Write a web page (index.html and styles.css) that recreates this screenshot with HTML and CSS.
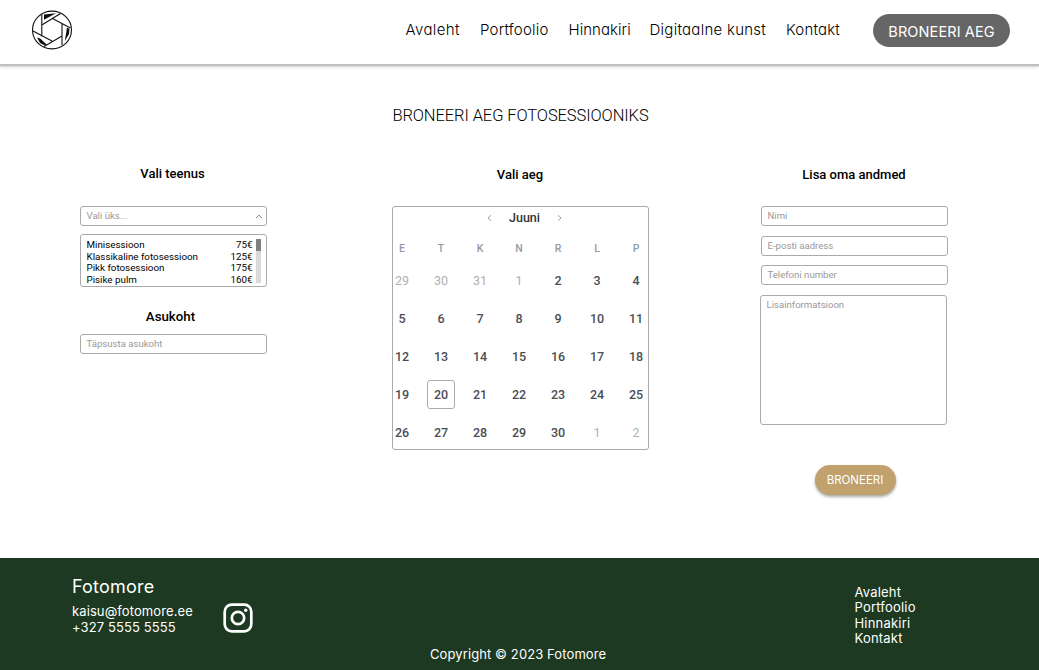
FILE: index.html
```html
<!DOCTYPE html>
<html lang="et">
<head>
<meta charset="utf-8">
<title>Fotomore</title>
<link rel="stylesheet" href="styles.css">
</head>
<body>
<header class="header">
  <svg class="logo" viewBox="0 0 42 42" fill="none" stroke="#111" stroke-width="1.1">
    <ellipse cx="21" cy="21" rx="19.500" ry="18.900"/>
    <path d="M10.800 5.500V27.500M10.800 16L29.500 4.500M21 9.300L39.500 19M31 15V36M31 27L13 37.500M21 32L2 22"/>
    <path d="M13 5.500L25 4.300L13 10.800zM36 18.500L38.500 20L38 25L33.800 32zM6 28.500L9.500 29.800L15.600 35.500L14 36.500L9 34z" fill="#111" stroke="none"/>
  </svg>
  <nav class="nav">
    <a class="nav-home">Avaleht</a>
    <a class="nav-portfolio">Portfoolio</a>
    <a class="nav-prices">Hinnakiri</a>
    <a class="nav-art">Digitaalne kunst</a>
    <a class="nav-contact">Kontakt</a>
  </nav>
  <a class="book-link">BRONEERI AEG</a>
</header>
<main class="main">
  <h1 class="title">BRONEERI AEG FOTOSESSIOONIKS</h1>
  <div class="columns">
    <section class="column service">
      <h2 class="heading">Vali teenus</h2>
      <div class="field select"><span>Vali üks...</span>
        <svg class="caret" viewBox="0 0 8 5" fill="none" stroke="#888"><path d="M1 4L4 1.200L7 4"/></svg>
      </div>
      <div class="options">
        <ul class="option-list">
          <li><span>Minisessioon</span><span>75€</span></li>
          <li><span>Klassikaline fotosessioon</span><span>125€</span></li>
          <li><span>Pikk fotosessioon</span><span>175€</span></li>
          <li><span>Pisike pulm</span><span>160€</span></li>
        </ul>
        <div class="scrollbar"><div class="thumb"></div></div>
      </div>
      <h2 class="heading location">Asukoht</h2>
      <div class="field">Täpsusta asukoht</div>
    </section>
    <section class="column">
      <h2 class="heading">Vali aeg</h2>
      <div class="calendar">
        <div class="month">
          <svg class="arrow" viewBox="0 0 5 8" fill="none" stroke="#888" stroke-width=".8"><path d="M4 1.200L1 4L4 6.800"/></svg>
          <span>Juuni</span>
          <svg class="arrow" viewBox="0 0 5 8" fill="none" stroke="#888" stroke-width=".8"><path d="M1 1.200L4 4L1 6.800"/></svg>
        </div>
        <div class="week names"><span>E</span><span>T</span><span>K</span><span>N</span><span>R</span><span>L</span><span>P</span></div>
        <div class="week"><span class="off">29</span><span class="off">30</span><span class="off">31</span><span class="off">1</span><span>2</span><span>3</span><span>4</span></div>
        <div class="week"><span>5</span><span>6</span><span>7</span><span>8</span><span>9</span><span>10</span><span>11</span></div>
        <div class="week"><span>12</span><span>13</span><span>14</span><span>15</span><span>16</span><span>17</span><span>18</span></div>
        <div class="week"><span>19</span><span class="selected">20</span><span>21</span><span>22</span><span>23</span><span>24</span><span>25</span></div>
        <div class="week"><span>26</span><span>27</span><span>28</span><span>29</span><span>30</span><span class="off">1</span><span class="off">2</span></div>
      </div>
    </section>
    <section class="column details">
      <h2 class="heading">Lisa oma andmed</h2>
      <div class="field">Nimi</div>
      <div class="field">E-posti aadress</div>
      <div class="field">Telefoni number</div>
      <div class="field notes">Lisainformatsioon</div>
      <a class="submit">BRONEERI</a>
    </section>
  </div>
</main>
<footer class="footer">
  <div class="contact">
    <div class="brand">Fotomore</div>
    <div class="mail">kaisu@fotomore.ee</div>
    <div class="phone">+327 5555 5555</div>
  </div>
  <svg class="instagram" viewBox="0 0 30 30" fill="none" stroke="#fff" stroke-width="2.700">
    <rect x="1.700" y="1.700" width="26.600" height="26.600" rx="7"/>
    <circle cx="15" cy="15" r="6.200"/>
    <circle cx="22.700" cy="7.300" r="1.700" fill="#fff" stroke="none"/>
  </svg>
  <div class="copyright">Copyright © 2023 Fotomore</div>
  <nav class="footer-nav"><a>Avaleht</a><a>Portfoolio</a><a>Hinnakiri</a><a>Kontakt</a></nav>
</footer>
</body>
</html>
```
FILE: styles.css
```css
* { box-sizing: border-box; }
body {
  margin: 0;
  height: 670px;
  display: flex;
  flex-direction: column;
  overflow: hidden;
  background: #fff;
  color: #000;
  font-family: Roboto, sans-serif;
}
.header {
  height: 64px;
  flex: none;
  display: flex;
  align-items: flex-start;
  padding-left: 31px;
  box-shadow: 0 2px 1px #c0c0c0, 0 3px 3px #d4d4d4;
}
.logo { width: 42px; height: 42px; margin-top: 9px; }
.nav {
  display: flex;
  margin-left: 332.500px;
  width: 467.500px;
  padding-top: 20px;
  font: 300 15px/20px Inter, sans-serif;
  font-feature-settings: "cv11";
  letter-spacing: .2px;
  white-space: nowrap;
}
.nav-home { width: 74.500px; letter-spacing: .4px; }
.nav-portfolio { width: 88.500px; }
.nav-prices { width: 81px; letter-spacing: .05px; }
.nav-art { width: 136.500px; letter-spacing: .27px; }
.book-link {
  width: 137px;
  height: 33px;
  margin-top: 13.500px;
  border-radius: 17px;
  background: #666;
  color: #fff;
  font: 400 14.500px/35px Inter, sans-serif;
  letter-spacing: .1px;
  text-align: center;
}
.main { flex: 1; }
.title {
  margin: 42px 0 0;
  padding-left: 2px;
  font-size: 16.500px;
  line-height: 20px;
  font-weight: 300;
  letter-spacing: -.1px;
  text-align: center;
}
.columns {
  display: grid;
  grid-template-columns: 187px 257px 187px;
  column-gap: 125px;
  padding: 38px 0 0 79.500px;
}
.details { margin: 0 13px 0 -13px; }
.heading {
  margin: 0 0 22px;
  padding-top: 1px;
  font-size: 13px;
  line-height: 19px;
  font-weight: 500;
  text-align: center;
}
.service .heading { padding: 0 1px 1px 0; }
.field {
  height: 20px;
  border: 1px solid #aaa;
  border-radius: 3px;
  padding: 0 6px;
  color: #999;
  font-size: 9.600px;
  line-height: 18px;
}
.select { display: flex; justify-content: space-between; align-items: center; padding-right: 3px; }
.caret { width: 8px; height: 5px; }
.options {
  display: flex;
  height: 53px;
  margin-top: 8px;
  padding: 4px 5px 3px 6px;
  border: 1px solid #aaa;
  border-radius: 3px;
}
.option-list { flex: 1; margin: 0 3px 0 0; padding: 0; list-style: none; font-size: 9.800px; line-height: 11.500px; }
.option-list li { display: flex; justify-content: space-between; }
.scrollbar { width: 5px; height: 44px; background: #d9d9d9; }
.thumb { height: 12px; background: #808080; }
.service .location { margin: 19px 0 8px; padding: 1px 5px 0 0; font-size: 13.300px; }
.calendar {
  height: 244px;
  border: 1px solid #aaa;
  border-radius: 3px;
}
.month {
  display: flex;
  justify-content: center;
  align-items: center;
  gap: 17px;
  padding: 1px 0 0 9px;
  font-size: 12.500px;
  line-height: 19px;
  font-weight: 500;
  color: #333;
}
.arrow { width: 5px; height: 8px; }
.week {
  display: grid;
  grid-template-columns: repeat(7, 39px);
  margin: 0 -10px;
  height: 38px;
  place-items: center;
  text-align: center;
  font-size: 12.500px;
  font-weight: 500;
  color: #4a4e54;
}
.names { height: 34px; padding-top: 8px; font-size: 10.500px; color: #949aa3; }
.off { color: #b0b0b0; font-weight: 400; }
.selected { width: 28px; height: 29px; line-height: 27px; border: 1px solid #aaa; border-radius: 3px; }
.details .field + .field { margin-top: 10px; }
.details .field + .field + .field { margin-top: 9px; }
.details .field + .notes.notes { height: 130px; margin: 10px 1px 0 -1px; }
.submit {
  display: block;
  width: 81px;
  height: 30px;
  margin: 40px 0 0 54px;
  border-radius: 15px;
  background: #c1a16e;
  box-shadow: 0 2px 3px #aaa;
  color: #fff;
  font: 400 11.500px/31px Inter, sans-serif;
  text-align: center;
}
.footer {
  height: 112px;
  flex: none;
  display: flex;
  align-items: flex-start;
  padding-left: 72px;
  background: #1d3921;
  color: #fff;
  font: 400 13px/15.500px Inter, sans-serif;
  letter-spacing: .1px;
}
.contact { width: 151px; padding-top: 18px; white-space: nowrap; }
.brand { margin-bottom: 6px; font-size: 18px; line-height: 22px; letter-spacing: .2px; }
.instagram { width: 30px; height: 30px; margin-top: 45px; }
.copyright { width: 177px; margin: 89px 0 0 177px; white-space: nowrap; }
.footer-nav { display: flex; flex-direction: column; margin: 26.500px 0 0 247.500px; letter-spacing: .2px; }
```
